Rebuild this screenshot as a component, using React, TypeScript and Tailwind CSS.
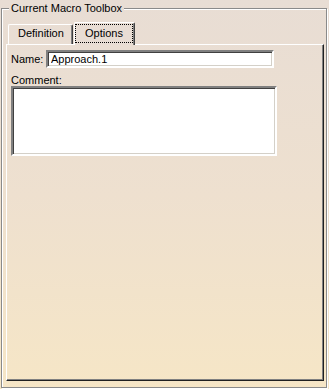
export default function App() {
  return (
    <div className="relative w-[329px] h-[389px] pt-[8px] pl-[1px] bg-linear-to-b from-[#e8ddd4] via-[#eee0cf] to-[#f6e6c6] text-[11px] text-black font-['Liberation_Sans',Arial,sans-serif]">
      <div className="w-[326px] h-[380px] border border-[#8a8a8a] shadow-[1px_1px_0_#fff,inset_1px_1px_0_#fff] flex flex-col">
        <div className="relative z-10 flex items-end h-[23px] -mb-px mt-[13px] ml-[6px]">
          <div className="w-[65px] h-[20px] mb-px border-l border-t border-r border-l-white border-t-white border-r-[#404040] shadow-[inset_-1px_0_0_#808080] rounded-t-[2px] pl-[9px] pt-[2px] leading-[13px]">
            Definition
          </div>
          <div className="ml-px w-[61px] h-[23px] bg-[#e8ddd4] border-l border-t border-r border-l-white border-t-white border-r-[#404040] shadow-[inset_-1px_0_0_#808080] rounded-t-[2px]">
            <div className="mt-px w-[58px] h-[19px] border border-dotted border-black flex items-center justify-center leading-[13px]">
              Options
            </div>
          </div>
        </div>
        <div className="flex-1 ml-[4px] mr-[2px] mb-[6px] border border-t-white border-l-white border-r-[#202020] border-b-[#202020] shadow-[inset_-1px_-1px_0_#808080] pt-[5px] pl-[4px] flex flex-col">
          <div className="flex items-center h-[18px]">
            <span className="w-[35px] leading-[13px]">Name:</span>
            <input
              readOnly
              value="Approach.1"
              className="w-[228px] h-[18px] bg-white border-2 border-t-[#808080] border-l-[#808080] border-b-white border-r-white shadow-[inset_1px_1px_0_#404040,inset_-1px_-1px_0_#d4d0c8] pl-[3px] leading-[13px] outline-none"
            />
          </div>
          <div className="mt-[6px] leading-[12px]">Comment:</div>
          <textarea
            readOnly
            className="w-[266px] h-[70px] bg-white border-2 border-t-[#808080] border-l-[#808080] border-b-white border-r-white shadow-[inset_1px_1px_0_#404040,inset_-1px_-1px_0_#d4d0c8] resize-none outline-none"
          />
        </div>
      </div>
      <div className="absolute left-[9px] top-[2px] px-[2px] leading-[13px] bg-[#e8ddd4]">
        Current Macro Toolbox
      </div>
    </div>
  );
}
